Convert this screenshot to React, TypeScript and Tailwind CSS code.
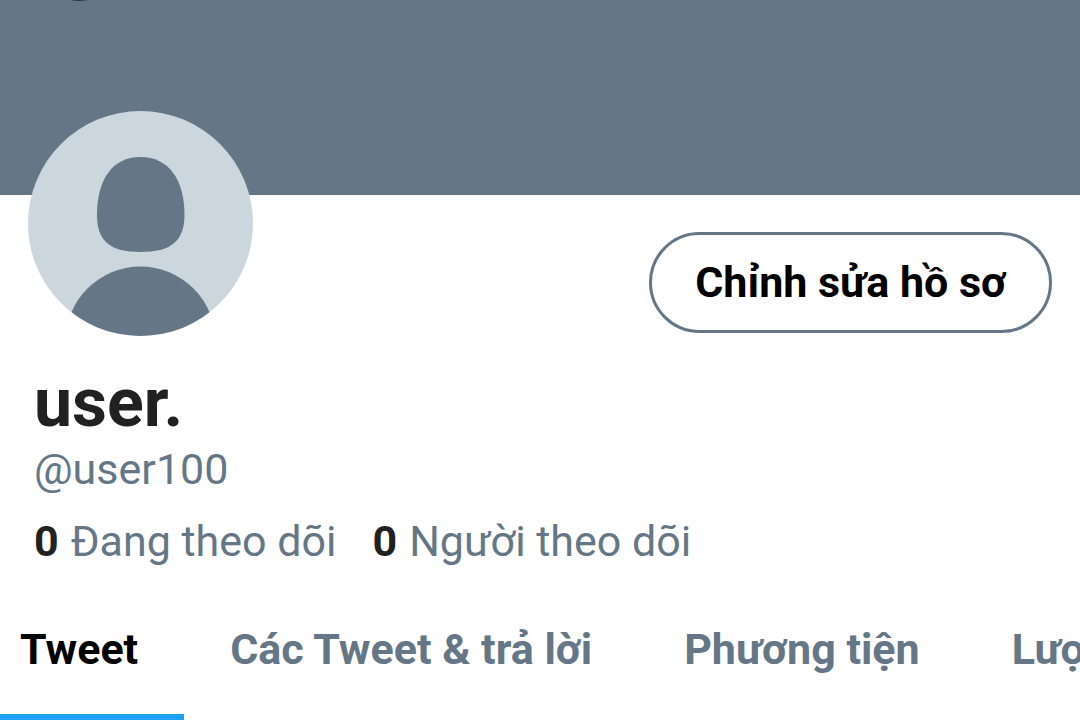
import React, { useState } from 'react';
import { clsx } from 'clsx';

const TABS = ['Tweet', 'Các Tweet & trả lời', 'Phương tiện', 'Lượt thích'];

const Avatar: React.FC = () => (
  <svg viewBox="0 0 225 225" className="w-[225px] h-[225px] shrink-0" role="img" aria-label="user.">
    <defs>
      <clipPath id="avatar-clip">
        <circle cx="112.5" cy="112.5" r="112.5" />
      </clipPath>
    </defs>
    <g clipPath="url(#avatar-clip)">
      <rect width="225" height="225" fill="#ccd6dd" />
      <path
        d="M112.5 46C141 46 156.5 69 156.5 104C156.5 130 143 141 112.5 141C82 141 69 130 69 104C69 69 84 46 112.5 46Z"
        fill="#657786"
      />
      <circle cx="112.5" cy="230.5" r="75" fill="#657786" />
    </g>
  </svg>
);

const Stat: React.FC<{ count: number; label: string }> = ({ count, label }) => (
  <a href="#" className="text-[#657786]">
    <span className="font-bold text-[#212121] mr-3">{count}</span>
    {label}
  </a>
);

export const Profile: React.FC = () => {
  const [activeTab, setActiveTab] = useState(TABS[0]);

  return (
    <div className="min-h-screen overflow-hidden bg-white font-['Roboto',sans-serif]">
      {/* Banner with the lower edge of the back button */}
      <div className="relative h-[195px] bg-[#657786]">
        <div className="absolute left-[39px] bottom-[194px] h-20 w-20 rounded-full bg-[#2d3945]" />
      </div>

      <div className="relative -mt-[84px] flex items-end justify-between px-7">
        <Avatar />
        <button className="mb-[3px] h-[101px] rounded-full border-3 border-[#657786] px-[43px] text-[43px] font-bold text-black">
          Chỉnh sửa hồ sơ
        </button>
      </div>

      <div className="px-[34px] pt-[27px]">
        <h1 className="text-[68px] leading-[80px] font-bold text-[#212121]">user.</h1>
        <p className="text-[43px] leading-[52px] text-[#657786]">@user100</p>
        <div className="mt-5 flex gap-9 text-[43px] leading-[52px]">
          <Stat count={0} label="Đang theo dõi" />
          <Stat count={0} label="Người theo dõi" />
        </div>
      </div>

      <nav className="mt-[13px] flex h-[140px] overflow-hidden" role="tablist">
        {TABS.map((tab) => (
          <button
            key={tab}
            role="tab"
            aria-selected={tab === activeTab}
            onClick={() => setActiveTab(tab)}
            className={clsx(
              'shrink-0 whitespace-nowrap border-b-6 px-[46px] pt-1 text-[43px] font-bold first:pl-5',
              tab === activeTab ? 'border-[#1da1f2] text-black' : 'border-transparent text-[#657786]'
            )}
          >
            {tab}
          </button>
        ))}
      </nav>
    </div>
  );
};

export default Profile;
